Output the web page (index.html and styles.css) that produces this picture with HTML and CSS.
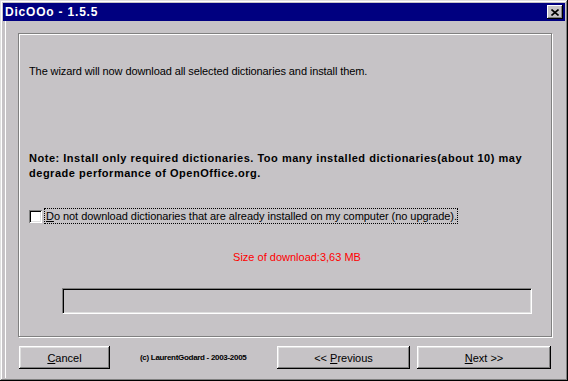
FILE: index.html
```html
<!DOCTYPE html>
<html lang="en">
<head>
    <meta charset="UTF-8">
    <meta name="viewport" content="width=device-width, initial-scale=1.0">
    <title>DicOOo - 1.5.5</title>
    <link rel="stylesheet" href="styles.css">
</head>
<body>

    <div class="janela">
        <div class="titulo">
            <span class="titulo-texto">DicOOo - 1.5.5</span>
            <button type="button" class="fechar">
                <svg width="8" height="7" viewBox="0 0 8 7">
                    <path d="M0.5 0.5 L7.5 6.5 M7.5 0.5 L0.5 6.5" stroke="#000" stroke-width="1.6" fill="none"/>
                </svg>
            </button>
        </div>

        <div class="cliente">
            <div class="grupo">
                <p class="info">The wizard will now download all selected dictionaries and install them.</p>
                <p class="nota">Note: Install only required dictionaries. Too many installed dictionaries(about 10) may<br>degrade performance of OpenOffice.org.</p>
                <label class="opcao">
                    <span class="caixa"></span>
                    <span class="opcao-texto"><u>D</u>o not download dictionaries that are already installed on my computer (no upgrade).</span>
                </label>
                <div class="tamanho">Size of download:3,63 MB</div>
                <div class="progresso"></div>
            </div>

            <div class="botoes">
                <button type="button" class="botao cancelar"><u>C</u>ancel</button>
                <span class="copyright">(c) LaurentGodard - 2003-2005</span>
                <button type="button" class="botao anterior">&lt;&lt; <u>P</u>revious</button>
                <button type="button" class="botao proximo"><u>N</u>ext &gt;&gt;</button>
            </div>
        </div>
    </div>

</body>
</html>
```

FILE: styles.css
```css
        * {
            box-sizing: border-box;
        }

        body {
            margin: 0;
            background-color: #c6c3c6;
            font-family: 'Liberation Sans', Arial, sans-serif;
            font-size: 11px;
            color: #000000;
        }

        .janela {
            width: 568px;
            height: 381px;
            padding: 3px;
            background-color: #c6c3c6;
            box-shadow: inset -1px -1px #000000, inset 1px 1px #dfdfdf,
                        inset -2px -2px #808080, inset 2px 2px #ffffff;
            display: flex;
            flex-direction: column;
        }

        .titulo {
            height: 18px;
            background-color: #000080;
            display: flex;
            align-items: center;
            justify-content: space-between;
            padding: 0 2px 0 2px;
        }

        .titulo-texto {
            color: #ffffff;
            font-weight: bold;
            font-size: 12px;
            letter-spacing: 0.8px;
        }

        .fechar {
            width: 16px;
            height: 14px;
            padding: 0;
            border: none;
            background-color: #c6c3c6;
            box-shadow: inset -1px -1px #000000, inset 1px 1px #ffffff,
                        inset -2px -2px #808080;
            display: flex;
            align-items: center;
            justify-content: center;
        }

        .cliente {
            flex: 1;
            margin-left: 2px;
            border-left: 1px solid #ffffff;
            padding: 12px 13px 0 12px;
        }

        .grupo {
            height: 304px;
            border: 1px solid #808080;
            box-shadow: inset 1px 1px #ffffff, 1px 1px #ffffff;
            padding: 31px 0 0 10px;
        }

        p {
            margin: 0;
        }

        .info {
            line-height: 13px;
            letter-spacing: -0.1px;
        }

        .nota {
            margin-top: 73px;
            font-weight: bold;
            line-height: 15px;
            letter-spacing: 0.52px;
        }

        .opcao {
            margin-top: 27px;
            height: 16px;
            display: flex;
            align-items: center;
        }

        .caixa {
            width: 13px;
            height: 13px;
            background-color: #ffffff;
            box-shadow: inset 1px 1px #808080, inset -1px -1px #ffffff,
                        inset 2px 2px #000000, inset -2px -2px #dfdfdf;
        }

        .opcao-texto {
            margin-left: 2px;
            border: 1px dotted #000000;
            padding: 1px 0 1px 1px;
            line-height: 12px;
            font-size: 11px;
            letter-spacing: -0.05px;
        }

        .tamanho {
            margin-top: 27px;
            width: 503px;
            padding-left: 33px;
            text-align: center;
            color: #ff0000;
            line-height: 13px;
        }

        .progresso {
            margin-top: 24px;
            margin-left: 33px;
            width: 470px;
            height: 26px;
            border-top: 1px solid #808080;
            border-left: 1px solid #808080;
            border-right: 1px solid #ffffff;
            border-bottom: 1px solid #ffffff;
            box-shadow: inset 1px 1px #000000, inset -1px -1px #dfdfdf;
        }

        .botoes {
            margin-top: 9px;
            display: flex;
            align-items: center;
            padding-left: 1px;
        }

        .botao {
            height: 23px;
            padding: 0;
            border: none;
            background-color: #c6c3c6;
            font-family: 'Liberation Sans', Arial, sans-serif;
            font-size: 11px;
            color: #000000;
            box-shadow: inset -1px -1px #000000, inset 1px 1px #ffffff,
                        inset -2px -2px #808080, inset 2px 2px #dfdfdf;
        }

        .cancelar {
            width: 91px;
        }

        .copyright {
            margin-left: 30px;
            width: 137px;
            font-size: 8px;
            font-weight: bold;
            letter-spacing: -0.3px;
        }

        .anterior {
            width: 133px;
        }

        .proximo {
            width: 134px;
            margin-left: 7px;
        }
```
